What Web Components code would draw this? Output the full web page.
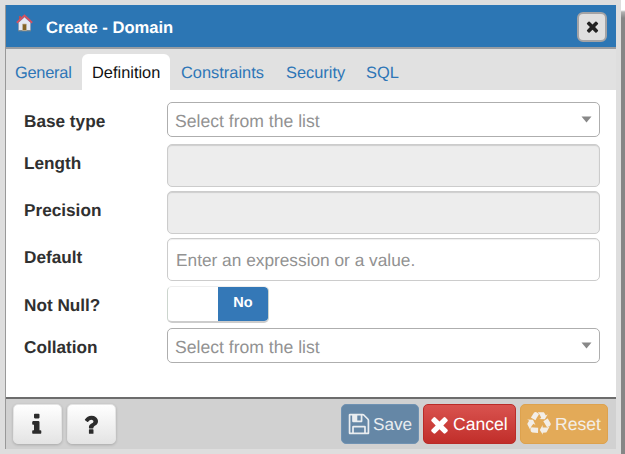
<!DOCTYPE html>
<html lang="en">
<head>
<meta charset="utf-8">
<title>Create - Domain</title>
<style>
html,body{margin:0;width:625px;height:454px;overflow:hidden;background:#fff;font-family:"Liberation Sans",Arial,sans-serif;text-rendering:geometricPrecision}
</style>
</head>
<body>
<domain-dialog></domain-dialog>
<script>
const define = (name, html, setup) => customElements.define(name, class extends HTMLElement {
  constructor() {
    super();
    this.attachShadow({ mode: 'open' }).innerHTML = html;
  }
  connectedCallback() { if (setup) setup(this, this.shadowRoot); }
});

const icons = {
  times: 'M1490 1322q0 40-28 68l-136 136q-28 28-68 28t-68-28l-294-294-294 294q-28 28-68 28t-68-28l-136-136q-28-28-28-68t28-68l294-294-294-294q-28-28-28-68t28-68l136-136q28-28 68-28t68 28l294 294 294-294q28-28 68-28t68 28l136 136q28 28 28 68t-28 68l-294 294 294 294q28 28 28 68z',
  save: 'M512 1536h768v-384h-768v384zm896 0h128v-896q0-14-10-38.5t-20-34.5l-281-281q-10-10-34-20t-39-10v416q0 40-28 68t-68 28h-576q-40 0-68-28t-28-68v-416h-128v1280h128v-416q0-40 28-68t68-28h832q40 0 68 28t28 68v416zm-384-928v-320q0-13-9.5-22.5t-22.5-9.5h-192q-13 0-22.5 9.5t-9.5 22.5v320q0 13 9.5 22.5t22.5 9.5h192q13 0 22.5-9.5t9.5-22.5zm640 32v928q0 40-28 68t-68 28h-1344q-40 0-68-28t-28-68v-1344q0-40 28-68t68-28h928q40 0 88 20t76 48l280 280q28 28 48 76t20 88z',
  info: 'M1216 1344v128q0 26-19 45t-45 19h-512q-26 0-45-19t-19-45v-128q0-26 19-45t45-19h64v-384h-64q-26 0-45-19t-19-45v-128q0-26 19-45t45-19h384q26 0 45 19t19 45v576h64q26 0 45 19t19 45zm-128-1152v192q0 26-19 45t-45 19h-256q-26 0-45-19t-19-45v-192q0-26 19-45t45-19h256q26 0 45 19t19 45z',
  question: 'M1088 1256v240q0 16-12 28t-28 12h-240q-16 0-28-12t-12-28v-240q0-16 12-28t28-12h240q16 0 28 12t12 28zm316-600q0 54-15.500 101t-35 76.500-55 59.500-57.500 43.500-61 35.500q-41 23-68.500 65t-27.500 67q0 17-12 32.500t-28 15.500h-240q-15 0-25.500-18.500t-10.500-37.500v-45q0-83 65-156.500t143-108.500q59-27 84-56t25-76q0-42-46.500-74t-107.500-32q-65 0-108 29-35 25-107 115-13 16-31 16-12 0-25-8l-164-125q-13-10-15.500-25t5.500-28q160-266 464-266 80 0 161 31t146 83 106 127.500 41 158.500z',
  recycle: 'M836 1169l-15 368-2 22-420-29q-36-3-67-31.500t-47-65.500q-11-27-14.500-55t4-65 12-55 21.500-64 19-53q78 12 509 28zm-387-586l180 379-147-92q-63 72-111.500 144.500t-72.500 125-39.500 94.500-18.500 63l-4 21-190-357q-17-26-18-56t6-47l8-18q35-63 114-188l-140-86zm1231 517l-188 359q-12 29-36.500 46.500t-43.500 20.500l-18 4q-71 7-219 12l8 164-230-367 211-362 7 173q170 16 283 5t170-33zm-785-924q-47 63-265 435l-317-187-19-12 225-356q20-31 60-45t80-10q24 2 48.500 12t42 21 41.500 33 36 34.500 36 39.500 32 35zm655 307l212 363q18 37 12.500 76t-27.500 74q-13 20-33 37t-38 28-48.500 22-47 16-51.500 14-46 12q-34-72-265-436l313-195zm-143-226l142-83-220 373-419-20 151-86q-34-89-75-166t-75.500-123.500-64.500-80-47-46.500l-17-13 405 1q31-3 58 10.500t39 28.500l11 15q39 61 112 190z'
};

define('glyph-icon', `<style>:host{display:block;flex:none;width:var(--size,25.5px);height:var(--size,25.5px)}svg{display:block;width:100%;height:100%;fill:currentColor}</style>
<svg viewBox="0 0 1792 1792"><path/></svg>`,
  (el, root) => root.querySelector('path').setAttribute('d', icons[el.getAttribute('name')]));

define('home-icon', `<style>:host{display:block;width:17px;height:18px}svg{display:block}</style>
<svg width="17" height="18" viewBox="0 0 17 18">
<path d="M2.500 8.500 8.500 3l6 5.500v8.200h-12z" fill="#e6e9f4" stroke="#8d97ab" stroke-width=".7"/>
<path d="M2 16.800h13" stroke="#708087" stroke-width="1"/>
<path d="M6.500 10h4v6.500h-4z" fill="#866426" stroke="#c0b9a8" stroke-width=".7"/>
<path d="M3 2h2v4H3z" fill="#b45159"/>
<path d="M.8 8.800 8.500 1.500l7.700 7.300" fill="none" stroke="#d45160" stroke-width="1.900"/>
</svg>`);

define('dialog-header', `<style>
:host{display:flex;box-sizing:border-box;height:44px;background:#2c76b4;border-bottom:2px solid #999da2;padding:7px 9px 0 10px;color:#fff}
home-icon{margin-top:2px}
.title{margin:6px 0 0 13px;font:bold 16.600px/19px "Liberation Sans",Arial,sans-serif;flex:1;white-space:nowrap}
.close{box-sizing:border-box;width:30px;height:30px;border:2px solid #a3a3a5;border-radius:6px;background:#dfdfdf;color:#222;display:grid;place-items:center;--size:17px}
glyph-icon{transform:translateY(-1px)}
</style><home-icon></home-icon><div class="title"><slot></slot></div><div class="close"><glyph-icon name="times"></glyph-icon></div>`);

define('tab-item', `<style>
:host{display:block;box-sizing:border-box;height:36px;padding:9px 10px 0;border-radius:6px 6px 0 0;color:#2e76b7;font:16.400px/20px "Liberation Sans",Arial,sans-serif;white-space:nowrap}
:host(:first-child){padding-left:9px;letter-spacing:-.25px}
:host([active]){background:#fff;color:#111}
</style><slot></slot>`);

define('tab-bar', `<style>:host{display:grid;grid-template-columns:76px 88px 105px 80px 60px;box-sizing:border-box;height:41px;padding-top:5px;background:#e1e1e1}::slotted(:nth-child(n+3)){margin-left:1px}</style><slot></slot>`);

define('form-row', `<style>
:host{display:grid;grid-template-columns:143px 433px;align-items:start}
label{display:block;padding-top:9px;font:bold 17.200px/21px "Liberation Sans",Arial,sans-serif;color:#303030;white-space:nowrap}
</style><label></label><slot></slot>`, (el, root) => root.querySelector('label').textContent = el.getAttribute('label'));

define('select-box', `<style>
:host{display:flex;align-items:center;box-sizing:border-box;height:35px;border:1px solid #aeaeae;border-radius:5px;background:#fff;padding:1px 7px 0 7px;color:#929292;font:17.600px/20px "Liberation Sans",Arial,sans-serif}
span{flex:1;padding-top:1px}svg{display:block}
</style><span><slot></slot></span><svg width="11" height="8"><path d="M.5.5h10l-5 6z" fill="#888"/></svg>`);

define('text-box', `<style>
:host{display:block;box-sizing:border-box;height:43px;border:1px solid #ccc;border-radius:5px;background:#fff;box-shadow:inset 0 1px 1px #0001;padding:11px 8px;color:#929292;font:17.300px/21px "Liberation Sans",Arial,sans-serif;white-space:nowrap}
:host([disabled]){background:#ededed;box-shadow:inset 0 1px 1px #0002}
</style><slot></slot>`);

define('toggle-switch', `<style>
:host{display:grid;grid-template-columns:50px 50px;box-sizing:border-box;width:102px;height:37px;border:1px solid #ccd5ce;border-top-color:#eee;border-bottom:2px solid #ccc;border-radius:5px;overflow:hidden;background:#fff}
div{background:#3478b7;color:#fff;text-align:center;font:bold 14.500px/33px "Liberation Sans",Arial,sans-serif;border-radius:0 3px 3px 0}
</style><span></span><div><slot></slot></div>`);

define('tool-button', `<style>
:host{display:flex;align-items:center;box-sizing:border-box;height:40px;padding:0 6px;border-radius:5px;font:17.600px/20px "Liberation Sans",Arial,sans-serif;color:#fff;white-space:nowrap;width:var(--w)}
:host([kind=plain]){justify-content:center;background:linear-gradient(#fff,#e4e4e4);color:#2c2c2c;box-shadow:0 1px 3px #0003;border:1px solid #e4e4e4}
:host([kind=save]){background:#6587a6;border:1px solid #7092b2;color:#e9edf0;--size:24px;font-size:17.200px}
:host([kind=cancel]){background:linear-gradient(#d9534f,#c12e2a);border:1px solid #b92c28;--size:25px}
:host([kind=reset]){background:#e3aa58;border:1px solid #dda24e;color:#f3eee7;--size:24px}
</style><glyph-icon></glyph-icon><slot></slot>`,
  (el, root) => {
    const icon = root.querySelector('glyph-icon');
    const fresh = document.createElement('glyph-icon');
    fresh.setAttribute('name', el.getAttribute('icon'));
    fresh.style.margin = el.getAttribute('gap') || '0';
    icon.replaceWith(fresh);
  });

define('dialog-footer', `<style>
:host{display:flex;box-sizing:border-box;height:52px;border-top:2px solid #6c6c6c;background:#d1d1d1;padding:5px 8px 0 7px}
.left{display:flex;gap:5px}.right{display:flex;gap:4px;margin-left:auto}
</style><div class="left"><slot name="left"></slot></div><div class="right"><slot></slot></div>`);

icons[null] = '';

define('domain-dialog', `<style>
:host{display:block;box-sizing:border-box;width:625px;height:454px;padding-right:4px;background:linear-gradient(#fff 0 10px,#b2b2b2 12px,#868686 18px)}
.frame{box-sizing:border-box;width:621px;height:454px;padding:5px;background:#dedede}
.panel{box-sizing:border-box;width:611px;height:444px;border-left:1px solid #999;background:#fff}
.form{box-sizing:border-box;height:307px;padding:12px 0 0 18px;display:grid;grid-template-rows:42px 47px 47px 48px 42px 36px;align-content:start}
</style>
<div class="frame"><div class="panel">
<dialog-header>Create - Domain</dialog-header>
<tab-bar><tab-item>General</tab-item><tab-item active>Definition</tab-item><tab-item>Constraints</tab-item><tab-item>Security</tab-item><tab-item>SQL</tab-item></tab-bar>
<div class="form">
<form-row label="Base type"><select-box>Select from the list</select-box></form-row>
<form-row label="Length"><text-box disabled></text-box></form-row>
<form-row label="Precision"><text-box disabled></text-box></form-row>
<form-row label="Default"><text-box>Enter an expression or a value.</text-box></form-row>
<form-row label="Not Null?"><toggle-switch>No</toggle-switch></form-row>
<form-row label="Collation"><select-box>Select from the list</select-box></form-row>
</div>
<dialog-footer>
<tool-button slot="left" kind="plain" icon="info" gap="1px 1px 0 0" style="--w:49px"></tool-button>
<tool-button slot="left" kind="plain" icon="question" gap="1px 2px 0 0" style="--w:49px"></tool-button>
<tool-button kind="save" icon="save" gap="0 2px 0 -1px" style="--w:78px">Save</tool-button>
<tool-button kind="cancel" icon="times" gap="0 1px 0 -3px" style="--w:93px">Cancel</tool-button>
<tool-button kind="reset" icon="recycle" gap="0 4px 0 0" style="--w:88px">Reset</tool-button>
</dialog-footer>
</div></div>`);
</script>
</body>
</html>
